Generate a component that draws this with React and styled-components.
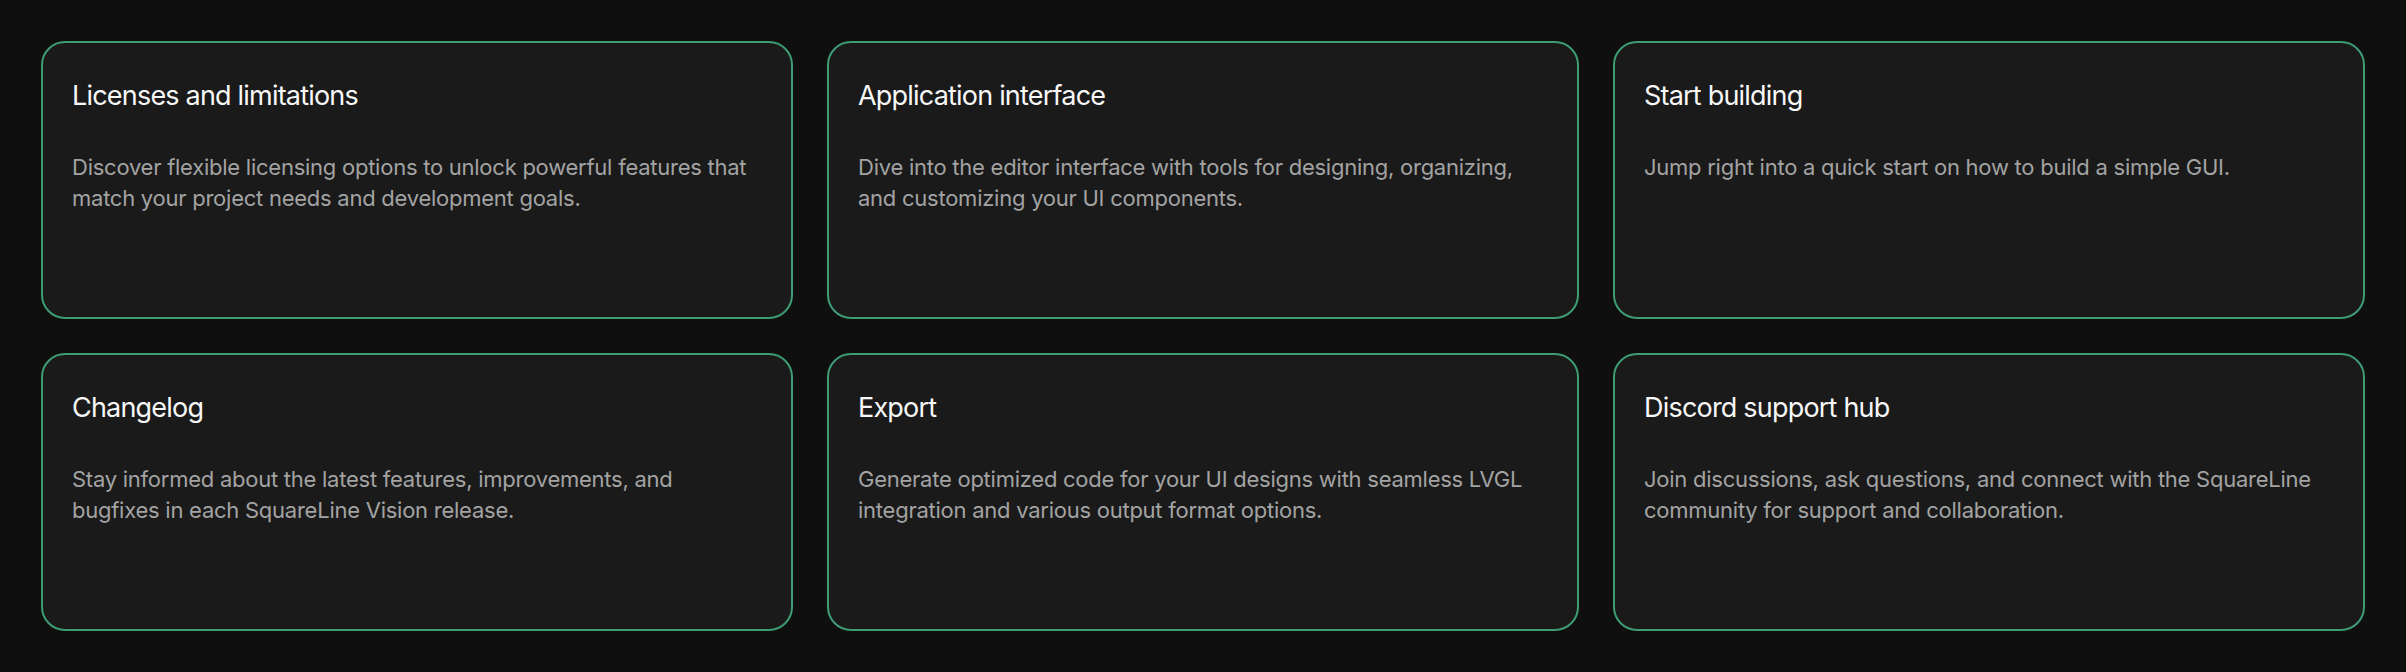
import React from 'react'
import styled, { createGlobalStyle } from 'styled-components'

const GlobalStyle = createGlobalStyle`
  html, body {
    margin: 0;
    padding: 0;
    background: #0f0f0f;
  }
  * {
    box-sizing: border-box;
  }
`

const Page = styled.main`
  height: 100vh;
  padding: 41px;
  background: #0f0f0f;
  display: grid;
  grid-template-columns: repeat(3, 1fr);
  grid-template-rows: repeat(2, 1fr);
  gap: 34px;
  font-family: Inter, "Noto Sans", sans-serif;
`

const Card = styled.a`
  display: flex;
  flex-direction: column;
  padding: 37px 29px;
  background: #1a1a1a;
  border: 2px solid #3d9c74;
  border-radius: 24px;
  text-decoration: none;
  cursor: pointer;
`

const Title = styled.h3`
  margin: 0 0 40px;
  font-size: 27px;
  font-weight: 400;
  line-height: 1.2;
  letter-spacing: -0.8px;
  color: #f7f7f7;
`

const Description = styled.p`
  margin: 0;
  font-size: 22px;
  font-weight: 400;
  line-height: 31px;
  letter-spacing: -0.25px;
  color: #a3a3a3;
`

const cards = [
  {
    title: 'Licenses and limitations',
    text: 'Discover flexible licensing options to unlock powerful features that match your project needs and development goals.'
  },
  {
    title: 'Application interface',
    text: 'Dive into the editor interface with tools for designing, organizing, and customizing your UI components.'
  },
  {
    title: 'Start building',
    text: 'Jump right into a quick start on how to build a simple GUI.'
  },
  {
    title: 'Changelog',
    text: 'Stay informed about the latest features, improvements, and bugfixes in each SquareLine Vision release.'
  },
  {
    title: 'Export',
    text: 'Generate optimized code for your UI designs with seamless LVGL integration and various output format options.'
  },
  {
    title: 'Discord support hub',
    text: 'Join discussions, ask questions, and connect with the SquareLine community for support and collaboration.'
  }
]

export default function App() {
  return (
    <>
      <GlobalStyle />
      <Page>
        {cards.map(card => (
          <Card key={card.title}>
            <Title>{card.title}</Title>
            <Description>{card.text}</Description>
          </Card>
        ))}
      </Page>
    </>
  )
}
